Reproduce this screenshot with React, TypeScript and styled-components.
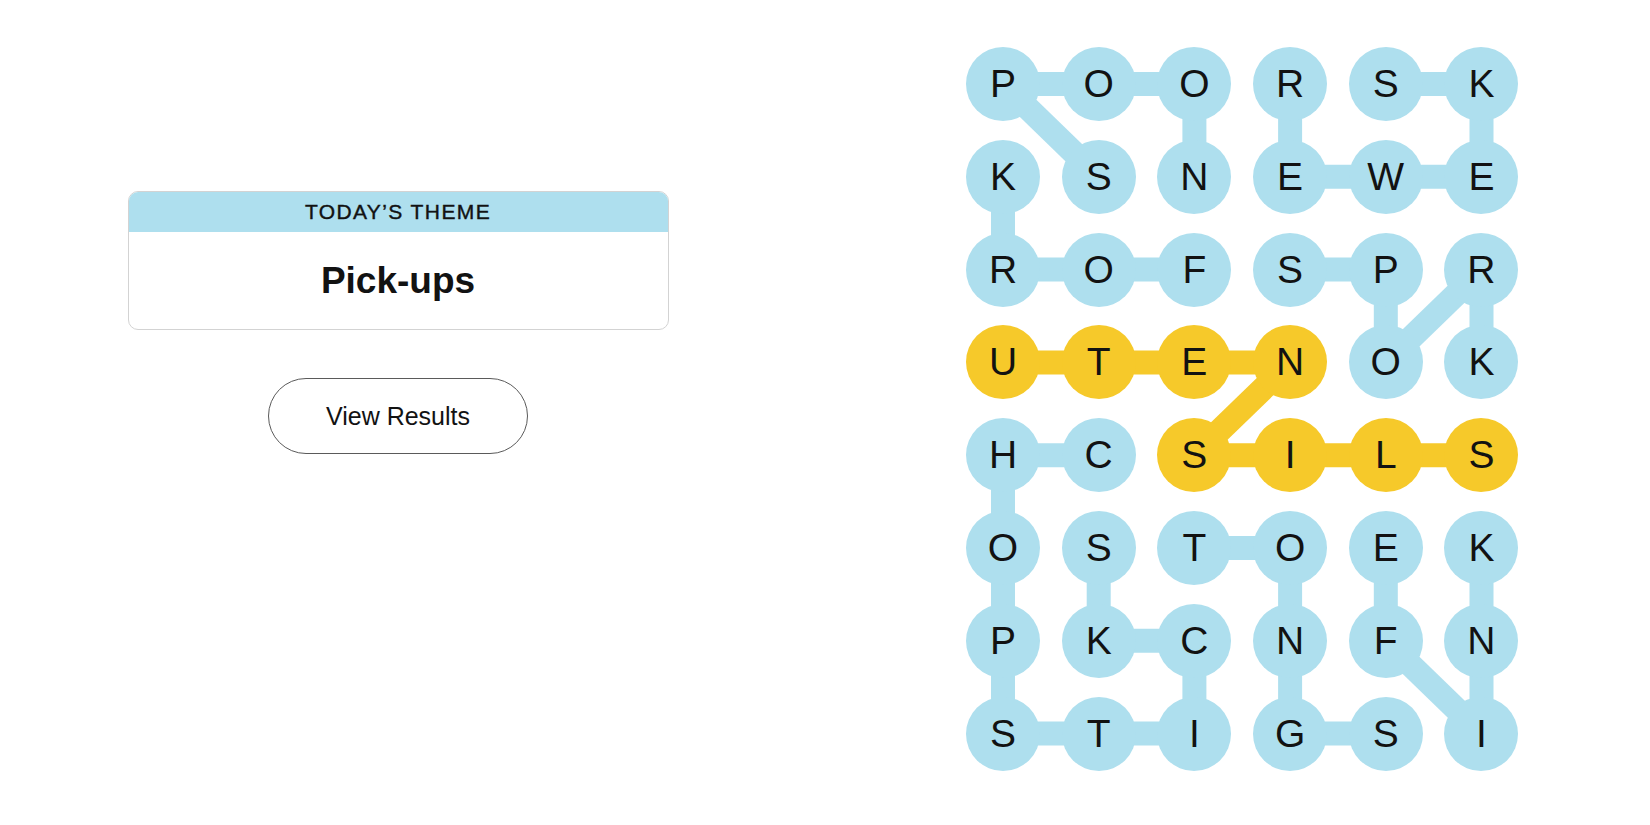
import React from "react";
import styled, { createGlobalStyle } from "styled-components";

const CELL = 74;
const COL_GAP = 21.7;
const ROW_GAP = 18.8;
const BLUE = "#aedfee";
const YELLOW = "#f6c92a";

const GRID = [
  "POORSK",
  "KSNEWE",
  "ROFSPR",
  "UTENOK",
  "HCSILS",
  "OSTOEK",
  "PKCNFN",
  "STIGSI",
];

type Cell = [number, number];

interface FoundWord {
  word: string;
  spangram?: boolean;
  path: Cell[];
}

const FOUND: FoundWord[] = [
  { word: "SPOON", path: [[1, 1], [0, 0], [0, 1], [0, 2], [1, 2]] },
  { word: "FORK", path: [[2, 2], [2, 1], [2, 0], [1, 0]] },
  { word: "SKEWER", path: [[0, 4], [0, 5], [1, 5], [1, 4], [1, 3], [0, 3]] },
  { word: "SPORK", path: [[2, 3], [2, 4], [3, 4], [2, 5], [3, 5]] },
  {
    word: "CHOPSTICKS",
    path: [[4, 1], [4, 0], [5, 0], [6, 0], [7, 0], [7, 1], [7, 2], [6, 2], [6, 1], [5, 1]],
  },
  { word: "TONGS", path: [[5, 2], [5, 3], [6, 3], [7, 3], [7, 4]] },
  { word: "KNIFE", path: [[5, 5], [6, 5], [7, 5], [6, 4], [5, 4]] },
  {
    word: "UTENSILS",
    spangram: true,
    path: [[3, 0], [3, 1], [3, 2], [3, 3], [4, 2], [4, 3], [4, 4], [4, 5]],
  },
];

const spangramCells = new Set(
  FOUND.filter(w => w.spangram).flatMap(w => w.path.map(([r, c]) => `${r}-${c}`))
);

const centerOf = ([r, c]: Cell) => ({
  x: c * (CELL + COL_GAP) + CELL / 2,
  y: r * (CELL + ROW_GAP) + CELL / 2,
});

const BOARD_W = 6 * CELL + 5 * COL_GAP;
const BOARD_H = 8 * CELL + 7 * ROW_GAP;

const GlobalStyle = createGlobalStyle`
  html, body {
    margin: 0;
    padding: 0;
    background: #ffffff;
  }
  body {
    font-family: "Liberation Sans", Arial, sans-serif;
    color: #121212;
  }
`;

const Page = styled.main`
  display: flex;
  align-items: flex-start;
  padding-top: 47px;
  width: 1650px;
  height: 825px;
  box-sizing: border-box;
`;

const LeftPanel = styled.section`
  width: 796px;
  display: flex;
  flex-direction: column;
  align-items: center;
  gap: 48px;
  padding-top: 144px;
`;

const ThemeCard = styled.div`
  width: 539px;
  border: 1px solid #d3d3d3;
  border-radius: 10px;
  overflow: hidden;
  background: #fff;
`;

const ThemeHeader = styled.div`
  height: 40px;
  background: ${BLUE};
  display: flex;
  align-items: center;
  justify-content: center;
  font-size: 21px;
  letter-spacing: 1.4px;
  -webkit-text-stroke: 0.4px #121212;
  text-transform: uppercase;
  color: #121212;
`;

const ThemeBody = styled.div`
  height: 97px;
  display: flex;
  align-items: center;
  justify-content: center;
  font-size: 37px;
  font-weight: 700;
  color: #121212;
`;

const ResultsButton = styled.button`
  width: 260px;
  height: 76px;
  border: 1px solid #5a5a5a;
  border-radius: 38px;
  background: #fff;
  font-family: "Liberation Sans", Arial, sans-serif;
  font-size: 25px;
  color: #121212;
  cursor: pointer;
`;

const RightPanel = styled.section`
  margin-left: 170px;
`;

const Board = styled.div`
  position: relative;
  width: ${BOARD_W}px;
  height: ${BOARD_H}px;
`;

const Connectors = styled.svg`
  position: absolute;
  inset: 0;
  z-index: 0;
`;

const LetterGrid = styled.div`
  position: relative;
  z-index: 1;
  display: grid;
  grid-template-columns: repeat(6, ${CELL}px);
  grid-auto-rows: ${CELL}px;
  column-gap: ${COL_GAP}px;
  row-gap: ${ROW_GAP}px;
`;

const Letter = styled.button<{ $spangram?: boolean }>`
  width: ${CELL}px;
  height: ${CELL}px;
  border: none;
  border-radius: 50%;
  padding: 0;
  background: ${p => (p.$spangram ? YELLOW : BLUE)};
  font-family: "Liberation Sans", Arial, sans-serif;
  font-size: 39px;
  color: #121212;
  display: flex;
  align-items: center;
  justify-content: center;
`;

export default function App() {
  return (
    <>
      <GlobalStyle />
      <Page>
        <LeftPanel>
          <ThemeCard>
            <ThemeHeader>Today’s Theme</ThemeHeader>
            <ThemeBody>Pick-ups</ThemeBody>
          </ThemeCard>
          <ResultsButton>View Results</ResultsButton>
        </LeftPanel>
        <RightPanel>
          <Board>
            <Connectors width={BOARD_W} height={BOARD_H}>
              {FOUND.map(w =>
                w.path.slice(1).map((cell, i) => {
                  const a = centerOf(w.path[i]);
                  const b = centerOf(cell);
                  return (
                    <line
                      key={`${w.word}-${i}`}
                      x1={a.x}
                      y1={a.y}
                      x2={b.x}
                      y2={b.y}
                      stroke={w.spangram ? YELLOW : BLUE}
                      strokeWidth={24}
                    />
                  );
                })
              )}
            </Connectors>
            <LetterGrid>
              {GRID.flatMap((row, r) =>
                row.split("").map((ch, c) => (
                  <Letter key={`${r}-${c}`} $spangram={spangramCells.has(`${r}-${c}`)}>
                    {ch}
                  </Letter>
                ))
              )}
            </LetterGrid>
          </Board>
        </RightPanel>
      </Page>
    </>
  );
}
